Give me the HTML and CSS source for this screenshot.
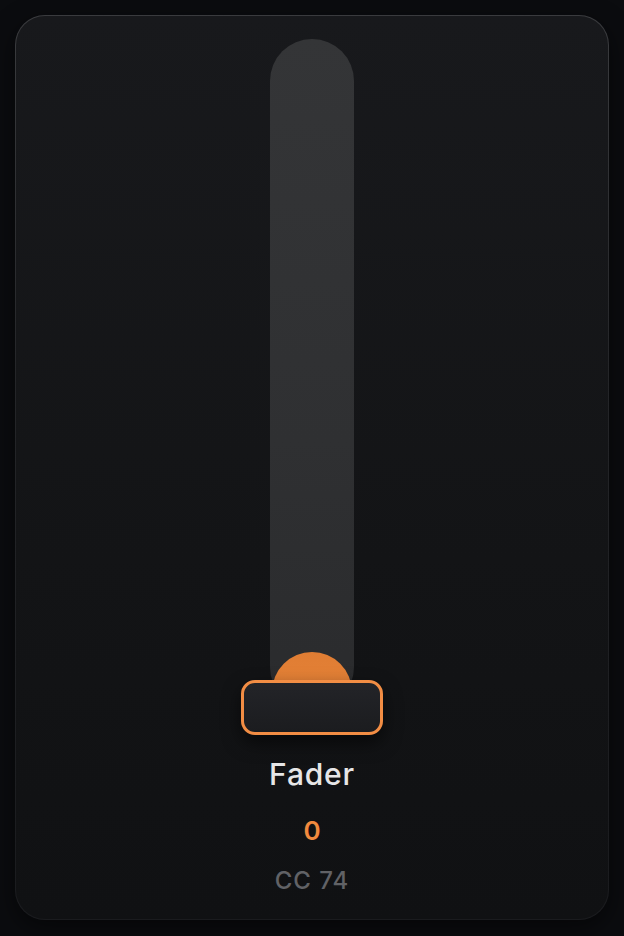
FILE: index.html
```html
<!DOCTYPE html>
<html>
<head>
<meta charset="utf-8">
<link rel="stylesheet" href="styles.css">
</head>
<body>
<div class="card">
  <div class="fader">
    <div class="track">
      <div class="fill"></div>
    </div>
    <div class="thumb"></div>
  </div>
  <div class="name">Fader</div>
  <div class="value">0</div>
  <div class="cc">CC 74</div>
</div>
</body>
</html>
```
FILE: styles.css
```css
html, body {
  margin: 0;
  padding: 0;
  background: #0b0c0f;
}
body {
  width: 624px;
  height: 936px;
  padding: 15px 15px 0 15px;
  box-sizing: border-box;
  font-family: Inter, "Noto Sans", sans-serif;
}
.card {
  width: 594px;
  height: 905px;
  box-sizing: border-box;
  border-radius: 30px;
  border: 1.5px solid transparent;
  background:
    linear-gradient(180deg, #18191c 0%, #131416 60%, #101113 100%) padding-box,
    linear-gradient(180deg, #3a3b3e 0%, #242528 40%, #1a1b1e 100%) border-box;
  box-shadow: 0 8px 24px rgba(0,0,0,0.5);
  display: flex;
  flex-direction: column;
  align-items: center;
  padding-top: 22.5px;
}
.fader {
  position: relative;
  width: 142px;
  height: 696px;
  display: flex;
  justify-content: center;
}
.track {
  position: relative;
  width: 84px;
  height: 670px;
  border-radius: 42px;
  background: linear-gradient(180deg, #343537 0%, #2f3032 60%, #2a2b2d 100%);
  overflow: hidden;
}
.fill {
  position: absolute;
  left: 2px;
  right: 2px;
  bottom: 0;
  height: 57px;
  border-radius: 40px 40px 0 0;
  background: linear-gradient(180deg, #e07d33 0%, #e8843a 100%);
}
.thumb {
  position: absolute;
  left: 0;
  bottom: 0;
  width: 142px;
  height: 55px;
  box-sizing: border-box;
  border: 3px solid #f28d44;
  border-radius: 14px;
  background: linear-gradient(180deg, #232428 0%, #1b1c1f 100%);
  box-shadow: 0 8px 18px rgba(0,0,0,0.55);
}
.name {
  margin-top: 21px;
  font-size: 30px;
  line-height: 36px;
  color: #e6e6e7;
  font-weight: 500;
  letter-spacing: 0.8px;
}
.value {
  margin-top: 24px;
  font-size: 26px;
  line-height: 30px;
  color: #f28a3e;
  font-weight: 600;
}
.cc {
  margin-top: 21px;
  font-size: 24px;
  line-height: 28px;
  color: #616266;
  font-weight: 500;
  letter-spacing: 1px;
}
```
